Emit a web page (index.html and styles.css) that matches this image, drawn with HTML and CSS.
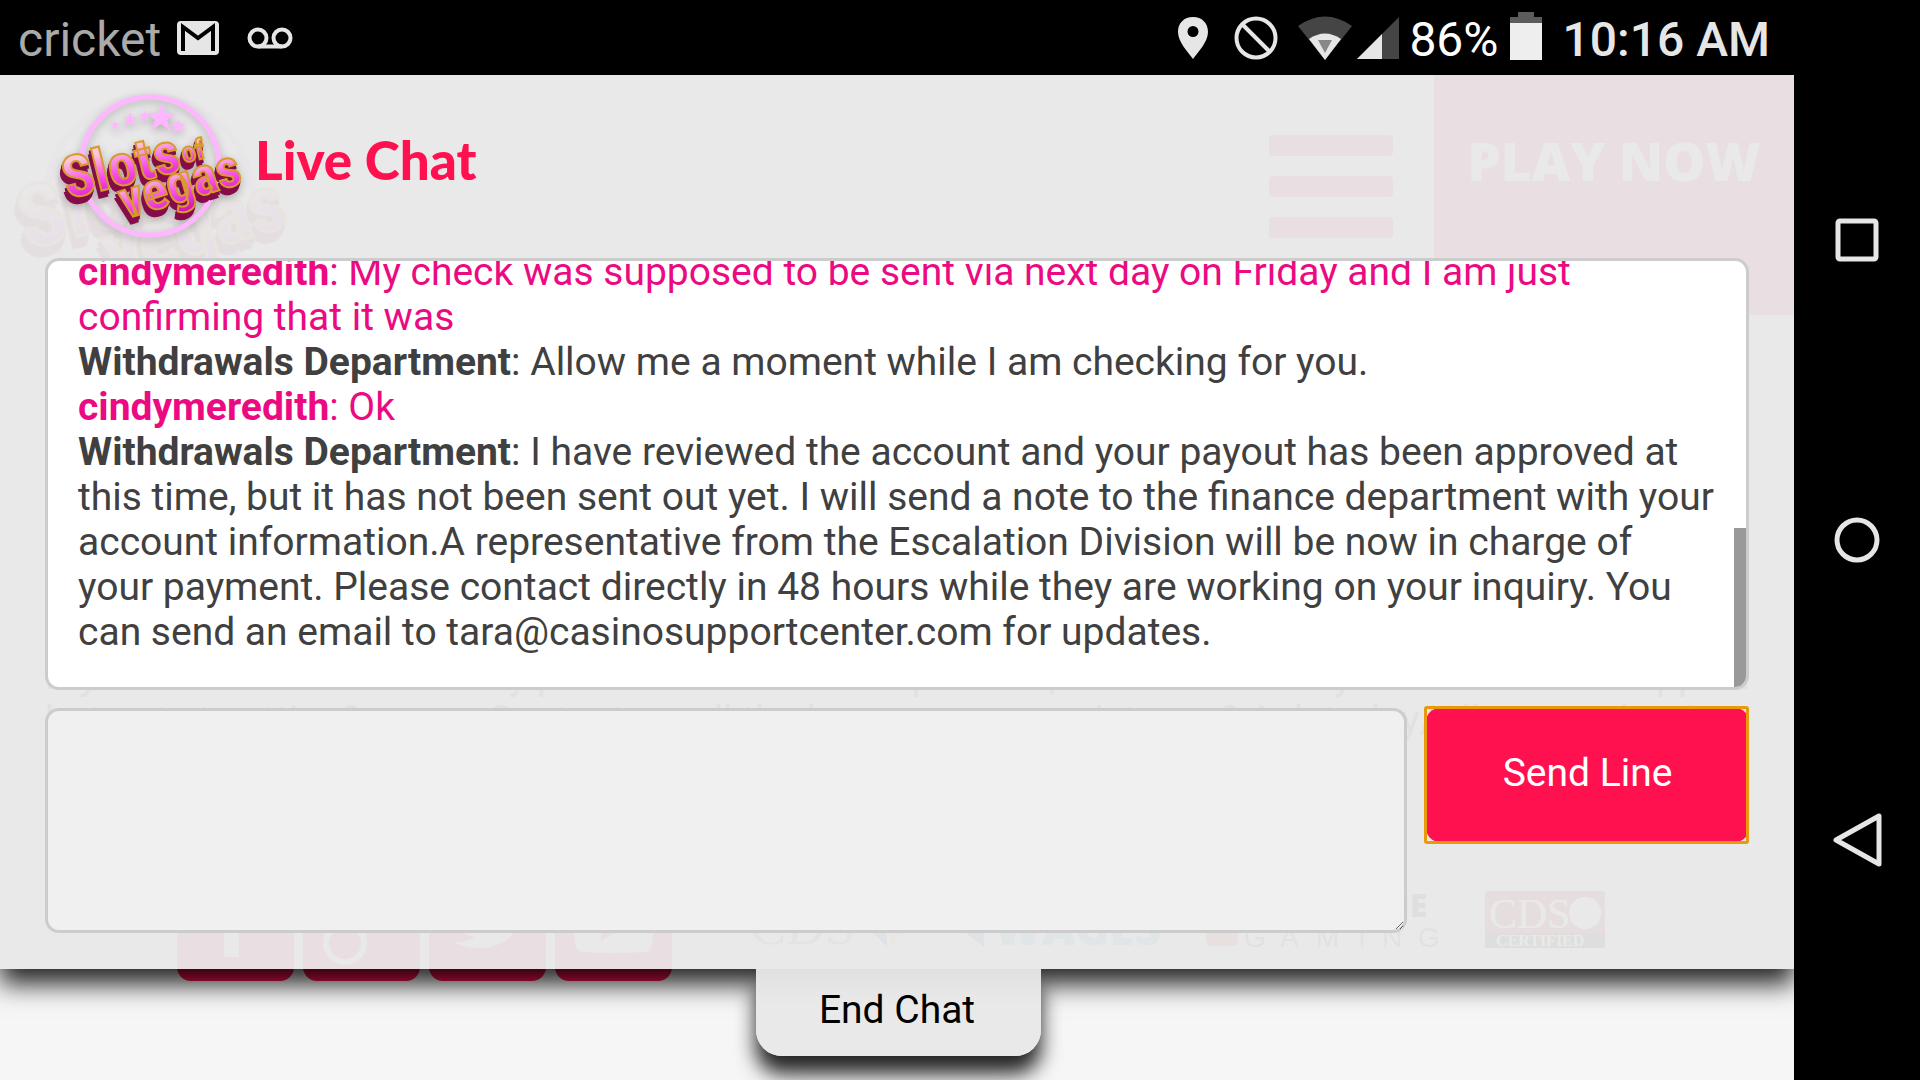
FILE: index.html
```html
<!DOCTYPE html>
<html lang="en">
<head>
<meta charset="utf-8">
<title>Live Chat</title>
<link rel="stylesheet" href="styles.css">
</head>
<body>
<svg class="defs" aria-hidden="true">
  <defs>
    <linearGradient id="pink" x1="0" y1="0" x2="0" y2="1">
      <stop offset=".25" stop-color="#fbc8d8"/><stop offset=".6" stop-color="#f850ee"/><stop offset="1" stop-color="#cf0aa4"/>
    </linearGradient>
    <symbol id="logo" viewBox="0 0 186 150">
      <circle cx="93" cy="74" r="69" fill="none" stroke="#ffb8ff" stroke-width="5"/>
      <path fill="#ffb8ff" d="M105 11l3 10 11 0-9 7 4 11-10-7-10 6 4-10-9-7 12 0zM73 20l2 5 5 0-4 3 1 6-4-3-5 3 2-6-4-3 5 0zM88 18l1 4 4 0-3 3 1 4-3-2-4 2 1-4-3-3 4 0zM58 28l1 3 4 0-3 2 1 4-3-2-3 2 1-4-3-2 4 0zM121 27l2 5 6 0-5 3 2 6-5-3-5 3 2-6-4-3 5 0z"/>
      <g class="logo-word">
        <text transform="translate(11 107) rotate(-14)" font-size="58">Slots</text>
        <text transform="translate(127 71) rotate(-14)" font-size="28">of</text>
        <text transform="translate(68 127) rotate(-17)" font-size="53">vegas</text>
      </g>
    </symbol>
  </defs>
</svg>

<div class="screen">
  <header class="status">
    <span class="carrier">cricket</span>
    <svg class="gmail" width="42" height="34" viewBox="0 0 42 34"><rect width="42" height="34" rx="4" fill="#e6e6e6"/><path d="M6 30V6l15 11L36 6v24" fill="none" stroke="#000" stroke-width="4"/></svg>
    <svg class="voicemail" width="46" height="22" viewBox="0 0 46 22"><g fill="none" stroke="#e6e6e6" stroke-width="4"><circle cx="11" cy="11" r="8.5"/><circle cx="35" cy="11" r="8.5"/><path d="M11 19.5h24"/></g></svg>
    <div class="status-right">
      <svg width="32" height="44" viewBox="0 0 32 44"><path fill="#e6e6e6" fill-rule="evenodd" d="M16 1C7 1 1 7 1 16c0 10 10 20 15 27 5-7 15-17 15-27C31 7 25 1 16 1zm0 9a5.500 5.500 0 1 1 0 11 5.500 5.500 0 0 1 0-11z"/></svg>
      <svg class="block" width="44" height="44" viewBox="0 0 44 44"><g fill="none" stroke="#e6e6e6" stroke-width="4"><circle cx="22" cy="22" r="19.500"/><path d="M8 8l28 28"/></g></svg>
      <svg class="wifi" width="54" height="44" viewBox="0 0 54 44"><path fill="#454545" d="M0 10Q27-9 54 10L27 44z"/><path fill="#e6e6e6" d="M11 23q16-11 32 0L27 44z"/><path fill="#888" d="M20 24h14l-7 13z"/></svg>
      <svg class="signal" width="42" height="44" viewBox="0 0 42 44"><path fill="#454545" d="M42 1v42H0z"/><path fill="#e6e6e6" d="M25 18v25H0z"/></svg>
      <span class="percent">86%</span>
      <svg class="battery" width="32" height="48" viewBox="0 0 32 48"><path fill="#5c5c5c" d="M8 0h16v5h8v7H0V5h8z"/><path fill="#eee" d="M0 11h32v37H0z"/></svg>
      <time class="clock">10:16 AM</time>
    </div>
  </header>

  <div class="stage">
    <div class="site">
      <div class="site-head">
        <svg class="site-logo" width="279" height="225"><use href="#logo"/></svg>
        <div class="burger"><i></i><i></i><i></i></div>
        <a class="play" href="#play">PLAY NOW</a>
      </div>
      <div class="site-copy">
        <p><span>My account</span><span>any problem</span><span>question,</span><span>for you</span><span>support</span></p>
        <p><span>but not at getting?</span><span>Contact us, all the hours</span><span>assistance? Ask today/All</span><span>the time</span></p>
      </div>
      <div class="site-foot">
        <svg class="social" width="495" height="117" viewBox="0 0 495 117">
          <g fill="#ff1150"><rect width="117" height="117" rx="14"/><rect x="126" width="117" height="117" rx="14"/><rect x="252" width="117" height="117" rx="14"/><rect x="378" width="117" height="117" rx="14"/></g>
          <g fill="#fff"><path d="M47 93V62H36V47h11V36c0-13 8-18 24-16v14c-8 0-9 1-9 5v8h9l-2 15h-7v31z"/>
          <path d="M276 78c9 1 16-1 22-5-7-1-12-5-13-11h7c-8-3-11-9-11-15l7 2c-7-6-8-13-4-20 8 10 18 15 31 16-2-13 5-21 16-21 5 0 9 2 12 5l10-4-7 9 9-2-8 8c1 32-32 56-71 38z"/>
          <path d="M404 31q32-4 65 0c5 1 7 5 7 10v28c0 12-3 19-9 19q-31 2-61 0c-7-1-9-7-9-19V41c0-6 2-9 7-10zm20 19v27l24-14z" fill-rule="evenodd"/></g>
          <g fill="none" stroke="#fff" stroke-width="6"><circle cx="168" cy="79" r="19"/><circle cx="170" cy="37" r="15"/><path d="M177 50c-12 7-8 9 2 14"/></g>
        </svg>
        <svg class="badges" width="855" height="64" viewBox="0 0 855 64">
          <text x="0" y="57" font-family="Liberation Serif" font-size="54" fill="#4a7fa0">CDS</text>
          <path fill="#267bb0" d="M117 40h20v20zM208 40l26 20V38z"/><path fill="#f3d232" d="M139 40h20l-18 18z"/>
          <text x="244" y="58" class="wide" font-size="46" fill="#3d9bd0">WAGES</text>
          <text x="551" y="30" class="wide" font-size="32" fill="#222">ONLINE</text>
          <rect x="456" y="38" width="32" height="21" rx="6" fill="#e02020"/>
          <g font-family="Liberation Sans" font-size="28" fill="#555"><text x="494" y="60">G</text><text x="530" y="60">A</text><text x="566" y="60">M</text><text x="608" y="60">I</text><text x="632" y="60">N</text><text x="668" y="60">G</text></g>
          <rect x="735" y="4" width="120" height="57" rx="3" fill="#b80909"/><path fill="#111" d="M735 46h120v15H735z"/>
          <text x="739" y="41" font-family="Liberation Serif" font-size="42" fill="#fff">CDS</text><circle cx="835" cy="26" r="16" fill="#fff"/>
          <text x="746" y="59" font-family="Liberation Serif" font-weight="700" font-size="16" fill="#fff">CERTIFIED</text>
        </svg>
      </div>
    </div>

    <main class="panel">
      <div class="panel-head">
        <svg class="logo" width="186" height="150" role="img" aria-label="Slots of Vegas"><use href="#logo"/></svg>
        <h1>Live Chat</h1>
      </div>
      <section class="log">
        <p class="me"><b>cindymeredith</b>: My check was supposed to be sent via next day on Friday and I am just confirming that it was</p>
        <p><b>Withdrawals Department</b>: Allow me a moment while I am checking for you.</p>
        <p class="me"><b>cindymeredith</b>: Ok</p>
        <p><b>Withdrawals Department</b>: I have reviewed the account and your payout has been approved at this time, but it has not been sent out yet. I will send a note to the finance department with your account information.A representative from the Escalation Division will be now in charge of your payment. Please contact directly in 48 hours while they are working on your inquiry. You can send an email to tara@casinosupportcenter.com for updates.</p>
        <span class="thumb"></span>
      </section>
      <form class="compose">
        <textarea aria-label="Message"></textarea>
        <button class="send" type="button">Send Line</button>
      </form>
      <button class="end" type="button">End Chat</button>
    </main>
  </div>
</div>

<nav class="keys">
  <button type="button" aria-label="Recent apps"><svg width="50" height="50" viewBox="0 0 50 50"><rect x="6" y="6" width="38" height="38" rx="2"/></svg></button>
  <button type="button" aria-label="Home"><svg width="50" height="50" viewBox="0 0 50 50"><circle cx="25" cy="25" r="20"/></svg></button>
  <button type="button" aria-label="Back"><svg width="50" height="50" viewBox="0 0 50 50"><path d="M47 1v48L4 25z"/></svg></button>
</nav>
</body>
</html>
```

FILE: styles.css
```css
* { box-sizing: border-box; }
body {
  margin: 0;
  min-height: 100vh;
  display: grid;
  grid-template-columns: minmax(0, 1fr) 126px;
  background: #000;
  font-family: Roboto, sans-serif;
  overflow: hidden;
}
button { border: 0; padding: 0; font: inherit; background: none; }
svg { display: block; flex: none; overflow: visible; }
.defs { position: absolute; width: 0; height: 0; }

.screen { display: flex; flex-direction: column; height: 100vh; }

/* status bar */
.status {
  display: flex;
  align-items: center;
  height: 75px;
  padding: 0 24px 0 18px;
  color: #e6e6e6;
  font-size: 48px;
  line-height: 75px;
}
.carrier { color: #aaa; padding-top: 4px; }
.gmail { margin-left: 16px; }
.voicemail { margin-left: 28px; }
.status-right { display: flex; align-items: center; margin-left: auto; }
.block { margin-left: 25px; }
.wifi { margin-left: 20px; }
.signal { margin-left: 5px; }
.percent { margin-left: 10px; color: #fff; padding-top: 4px; }
.battery { margin: 0 20px 3px 12px; }
.clock { font-weight: 500; padding-top: 4px; }

/* casino page under the chat panel */
.stage { position: relative; flex: 1; overflow: hidden; background: #f6f6f6; }
.site { display: flex; flex-direction: column; height: 100%; padding-bottom: 99px; }
.site-head { display: flex; height: 240px; }
.site-logo { margin: 14px auto 0 10px; }
.burger { display: flex; flex-direction: column; gap: 20px; width: 124px; margin-right: 41px; padding-top: 60px; }
.burger i { height: 21px; border-radius: 4px; background: #ff1150; }
.play {
  width: 360px;
  padding-top: 46px;
  background: #ff1150;
  color: #fff;
  font: 800 53px/80px "Open Sans", sans-serif;
  text-align: center;
  text-decoration: none;
}
.site-copy {
  margin: auto 45px 122px;
  color: #444;
  font-size: 39px;
  line-height: 44px;
}
.site-copy p { display: flex; justify-content: space-between; margin: 0; }
.site-foot { display: flex; align-items: flex-start; gap: 78px; padding-left: 177px; }
.badges { margin-top: 23px; }
.wide { font-family: "Open Sans", sans-serif; font-weight: 800; }

/* chat panel */
.panel {
  position: absolute;
  inset: 0 0 auto;
  padding: 0 45px 36px;
  background: rgba(232, 232, 232, .955);
  box-shadow: 0 15px 24px rgba(0, 0, 0, .85);
  font-size: 39px;
  line-height: 45px;
}
.panel-head { display: flex; align-items: center; height: 183px; padding-left: 12px; }
.logo { filter: drop-shadow(0 3px 4px rgba(0, 0, 0, .25)); }
.logo-word {
  font-family: "Liberation Sans Narrow", "Roboto Condensed", "Liberation Serif", serif;
  font-weight: 700;
  fill: url(#pink);
  stroke: #d79a2c;
  stroke-width: 2px;
  filter: drop-shadow(-1px 3px 0 #850c48) drop-shadow(-1px 4px 0 #850c48);
}
h1 { margin: 0 0 14px 12px; color: #ff1150; font: 900 53px/60px Lato, sans-serif; }
.log {
  position: relative;
  display: flex;
  flex-direction: column;
  justify-content: flex-end;
  height: 432px;
  padding: 0 30px 32px;
  overflow: hidden;
  border: 3px solid #ccc;
  border-radius: 14px;
  background: #fff;
  color: #404040;
}
.log p { flex: none; margin: 0; }
.log .me { color: #eb0a82; }
.thumb { position: absolute; right: 0; bottom: 0; width: 12px; height: 159px; background: #999; }
.compose { display: flex; align-items: flex-start; gap: 19px; margin-top: 18px; }
textarea {
  flex: 1;
  height: 225px;
  padding: 20px 30px;
  border: 3px solid #ccc;
  border-radius: 14px;
  background: #f0f0f0;
  font: inherit;
}
.send {
  position: relative;
  width: 323px;
  height: 134px;
  padding-bottom: 4px;
  border-radius: 14px;
  background: #ff1150;
  color: #fff;
}
.send::after { content: ""; position: absolute; inset: -2px 0 -2px -2px; border: 3px solid #e89a0c; border-radius: 3px; }
.end {
  position: absolute;
  top: 100%;
  left: 50%;
  width: 285px;
  height: 87px;
  margin-left: -141px;
  padding: 0 3px 5px 0;
  border-radius: 0 0 26px 26px;
  background: rgba(232, 232, 232, .955);
  box-shadow: 0 18px 20px rgba(0, 0, 0, .85);
  clip-path: inset(0 -40px -60px);
  color: #000;
}

/* navigation keys */
.keys { display: flex; flex-direction: column; align-items: center; justify-content: space-around; padding: 90px 0; }
.keys svg { fill: none; stroke: #e6e6e6; stroke-width: 5; stroke-linejoin: round; }
```
